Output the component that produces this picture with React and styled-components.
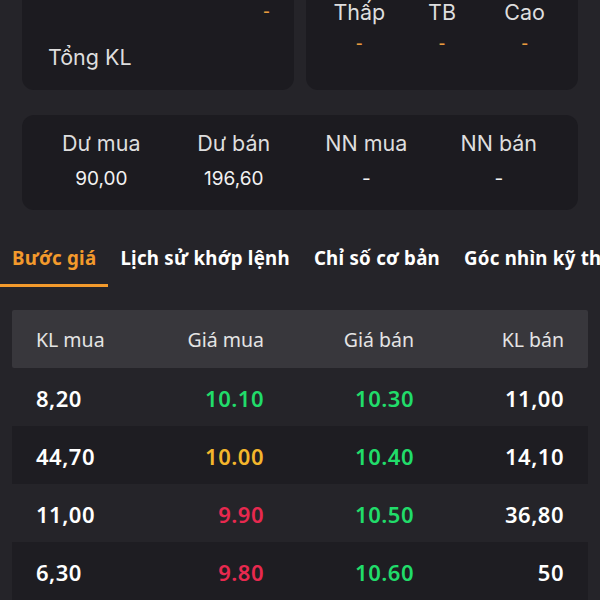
import React, { useState } from 'react'
import styled, { createGlobalStyle } from 'styled-components'

const GlobalStyle = createGlobalStyle`
  html, body {
    margin: 0;
    padding: 0;
    background: #252429;
  }
  * { box-sizing: border-box; }
`

const stats = [
  { label: 'Dư mua', value: '90,00' },
  { label: 'Dư bán', value: '196,60' },
  { label: 'NN mua', value: '-' },
  { label: 'NN bán', value: '-' },
]

const ranges = ['Thấp', 'TB', 'Cao']

const tabs = ['Bước giá', 'Lịch sử khớp lệnh', 'Chỉ số cơ bản', 'Góc nhìn kỹ thuật']

const orders = [
  { buyVol: '8,20', buy: '10.10', buyTone: 'up', sell: '10.30', sellTone: 'up', sellVol: '11,00' },
  { buyVol: '44,70', buy: '10.00', buyTone: 'ref', sell: '10.40', sellTone: 'up', sellVol: '14,10' },
  { buyVol: '11,00', buy: '9.90', buyTone: 'down', sell: '10.50', sellTone: 'up', sellVol: '36,80' },
  { buyVol: '6,30', buy: '9.80', buyTone: 'down', sell: '10.60', sellTone: 'up', sellVol: '50' },
]

const toneColor = {
  up: '#21dc6a',
  ref: '#f4b62c',
  down: '#e8294f',
}

const App = () => {
  const [active, setActive] = useState(0)

  return (
    <Page>
      <GlobalStyle />
      <TopCards>
        <Card>
          <InfoRow>
            <InfoLabel></InfoLabel>
            <Dash>-</Dash>
          </InfoRow>
          <InfoRow>
            <InfoLabel>Tổng KL</InfoLabel>
            <span></span>
          </InfoRow>
        </Card>
        <Card>
          <RangeGrid>
            {ranges.map((r) => (
              <RangeCell key={r}>
                <CardLabel>{r}</CardLabel>
                <Dash>-</Dash>
              </RangeCell>
            ))}
          </RangeGrid>
        </Card>
      </TopCards>

      <StatCard>
        {stats.map((s) => (
          <StatCell key={s.label}>
            <CardLabel>{s.label}</CardLabel>
            <StatValue>{s.value}</StatValue>
          </StatCell>
        ))}
      </StatCard>

      <TabBar>
        {tabs.map((t, i) => (
          <Tab key={t} $active={i === active} onClick={() => setActive(i)}>
            {t}
          </Tab>
        ))}
      </TabBar>

      <Table>
        <HeadRow>
          <Cell>KL mua</Cell>
          <Cell $right>Giá mua</Cell>
          <Cell $right>Giá bán</Cell>
          <Cell $right>KL bán</Cell>
        </HeadRow>
        {orders.map((o, i) => (
          <Row key={i} $dark={i % 2 === 1}>
            <Value>{o.buyVol}</Value>
            <Value $right $tone={o.buyTone}>{o.buy}</Value>
            <Value $right $tone={o.sellTone}>{o.sell}</Value>
            <Value $right>{o.sellVol}</Value>
          </Row>
        ))}
      </Table>
    </Page>
  )
}

export default App

const Page = styled.div`
  width: 600px;
  height: 600px;
  overflow: hidden;
  background: #252429;
  color: #fff;
`

const TopCards = styled.div`
  display: grid;
  grid-template-columns: 1fr 1fr;
  gap: 12px;
  padding: 0 22px;
  margin-top: -20px;
`

const Card = styled.div`
  background: #1c1b20;
  border-radius: 12px;
  padding: 18px 24px 19px 26px;
`

const InfoRow = styled.div`
  display: flex;
  justify-content: space-between;
  align-items: center;
  height: 28px;

  & + & {
    margin-top: 17px;
  }
`

const InfoLabel = styled.span`
  font-family: Inter, "Liberation Sans", sans-serif;
  font-size: 21.5px;
  color: #dedede;
`

const Dash = styled.span`
  font-family: Inter, "Liberation Sans", sans-serif;
  font-size: 15px;
  font-weight: 600;
  color: #e89b3e;
  line-height: 20px;
`

const RangeGrid = styled.div`
  display: grid;
  grid-template-columns: repeat(3, 1fr);
  margin: 0 -12px 0 -14px;
`

const RangeCell = styled.div`
  display: flex;
  flex-direction: column;
  align-items: center;
  gap: 8px;
`

const CardLabel = styled.div`
  font-family: Inter, "Liberation Sans", sans-serif;
  font-size: 21.5px;
  line-height: 28px;
  color: #dedede;
`

const StatCard = styled.div`
  margin: 25px 22px 0;
  background: #1c1b20;
  border-radius: 12px;
  padding: 14px 13px 18px;
  display: grid;
  grid-template-columns: repeat(4, 1fr);
`

const StatCell = styled.div`
  display: flex;
  flex-direction: column;
  align-items: center;
  gap: 9px;
`

const StatValue = styled.div`
  font-family: Inter, "Liberation Sans", sans-serif;
  font-size: 19px;
  line-height: 26px;
  color: #f2f2f2;
`

const TabBar = styled.div`
  margin-top: 22px;
  display: flex;
  white-space: nowrap;
  overflow: hidden;
`

const Tab = styled.div`
  flex-shrink: 0;
  padding: 13px 12px;
  font-family: "Noto Sans", sans-serif;
  font-size: 18.7px;
  font-weight: 700;
  line-height: 26px;
  letter-spacing: 0.25px;
  color: ${(p) => (p.$active ? '#f39a2c' : '#ffffff')};
  border-bottom: 3px solid ${(p) => (p.$active ? '#f39a2c' : 'transparent')};
  cursor: pointer;
`

const Table = styled.div`
  margin: 23px 12px 0;
`

const HeadRow = styled.div`
  display: grid;
  grid-template-columns: 114px 114px 150px 150px;
  align-items: center;
  height: 58px;
  padding: 0 24px;
  background: #38373c;
  border-radius: 2px;
`

const Cell = styled.div`
  font-family: "Noto Sans", sans-serif;
  font-size: 19.5px;
  color: #e4e4e4;
  text-align: ${(p) => (p.$right ? 'right' : 'left')};
`

const Row = styled.div`
  display: grid;
  grid-template-columns: 114px 114px 150px 150px;
  align-items: center;
  height: 58px;
  padding: 0 24px;
  background: ${(p) => (p.$dark ? '#1e1d22' : 'transparent')};
`

const Value = styled.div`
  font-family: "Noto Sans", sans-serif;
  font-size: 22px;
  font-weight: 600;
  letter-spacing: 0.5px;
  line-height: 30px;
  padding-top: 2px;
  color: ${(p) => (p.$tone ? toneColor[p.$tone] : '#ffffff')};
  text-align: ${(p) => (p.$right ? 'right' : 'left')};
`
